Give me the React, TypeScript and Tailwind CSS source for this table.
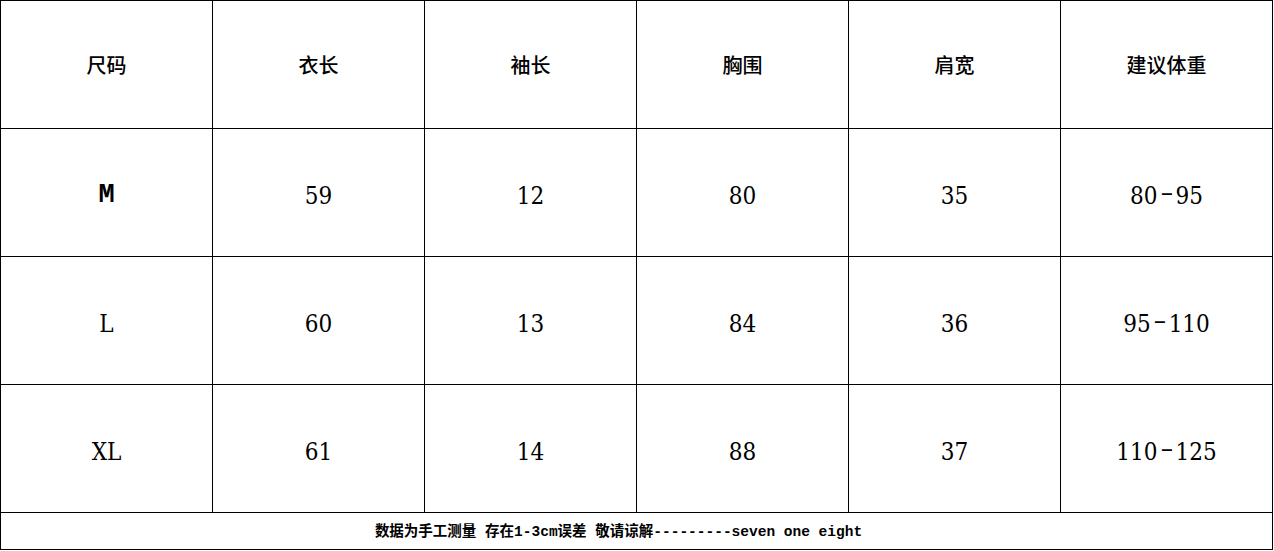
import React from 'react'

const headers = ['尺码', '衣长', '袖长', '胸围', '肩宽', '建议体重']

const rows = [
  ['M', '59', '12', '80', '35', '80-95'],
  ['L', '60', '13', '84', '36', '95-110'],
  ['XL', '61', '14', '88', '37', '110-125'],
]

// Splits "80-95" so the dash gets the long thin look of the source sheet
function Value({ text }: { text: string }) {
  const parts = text.split('-')
  if (parts.length === 1) return <>{text}</>
  return (
    <>
      {parts[0]}
      <span className="relative -top-[4px] inline-block w-[18px] scale-x-[1.6] text-center font-['Liberation_Serif',serif]">
        -
      </span>
      {parts[1]}
    </>
  )
}

function SizeLabel({ text }: { text: string }) {
  if (text === 'M') {
    return <span className="font-['Liberation_Mono',monospace] text-[27px] font-bold">M</span>
  }
  return <span>{text}</span>
}

export default function App() {
  return (
    <div className="min-h-screen bg-white">
      <div className="w-[1273px] border-l border-t border-black text-black">
        {/* Header row */}
        <div className="grid grid-cols-[repeat(6,212px)]">
          {headers.map((h) => (
            <div
              key={h}
              className="flex h-[128px] items-center justify-center border-b border-r border-black font-['Noto_Sans_CJK_SC',sans-serif] text-[20px] font-medium"
            >
              {h}
            </div>
          ))}
        </div>

        {/* Body rows */}
        {rows.map((row) => (
          <div key={row[0]} className="grid grid-cols-[repeat(6,212px)]">
            {row.map((cell, i) => (
              <div
                key={i}
                className="flex h-[128px] items-center justify-center border-b border-r border-black pt-[6px] font-['DejaVu_Serif_Condensed','DejaVu_Serif',serif] text-[24px] font-stretch-condensed"
              >
                {i === 0 ? <SizeLabel text={cell} /> : <Value text={cell} />}
              </div>
            ))}
          </div>
        ))}

        {/* Footer note */}
        <div className="flex h-[37px] w-[1272px] items-center justify-center border-b border-r border-black pr-9 pt-[3px] font-['Liberation_Mono','Noto_Sans_CJK_SC',monospace] text-[14.5px] font-bold">
          数据为手工测量 存在1-3cm误差 敬请谅解---------seven one eight
        </div>
      </div>
    </div>
  )
}
